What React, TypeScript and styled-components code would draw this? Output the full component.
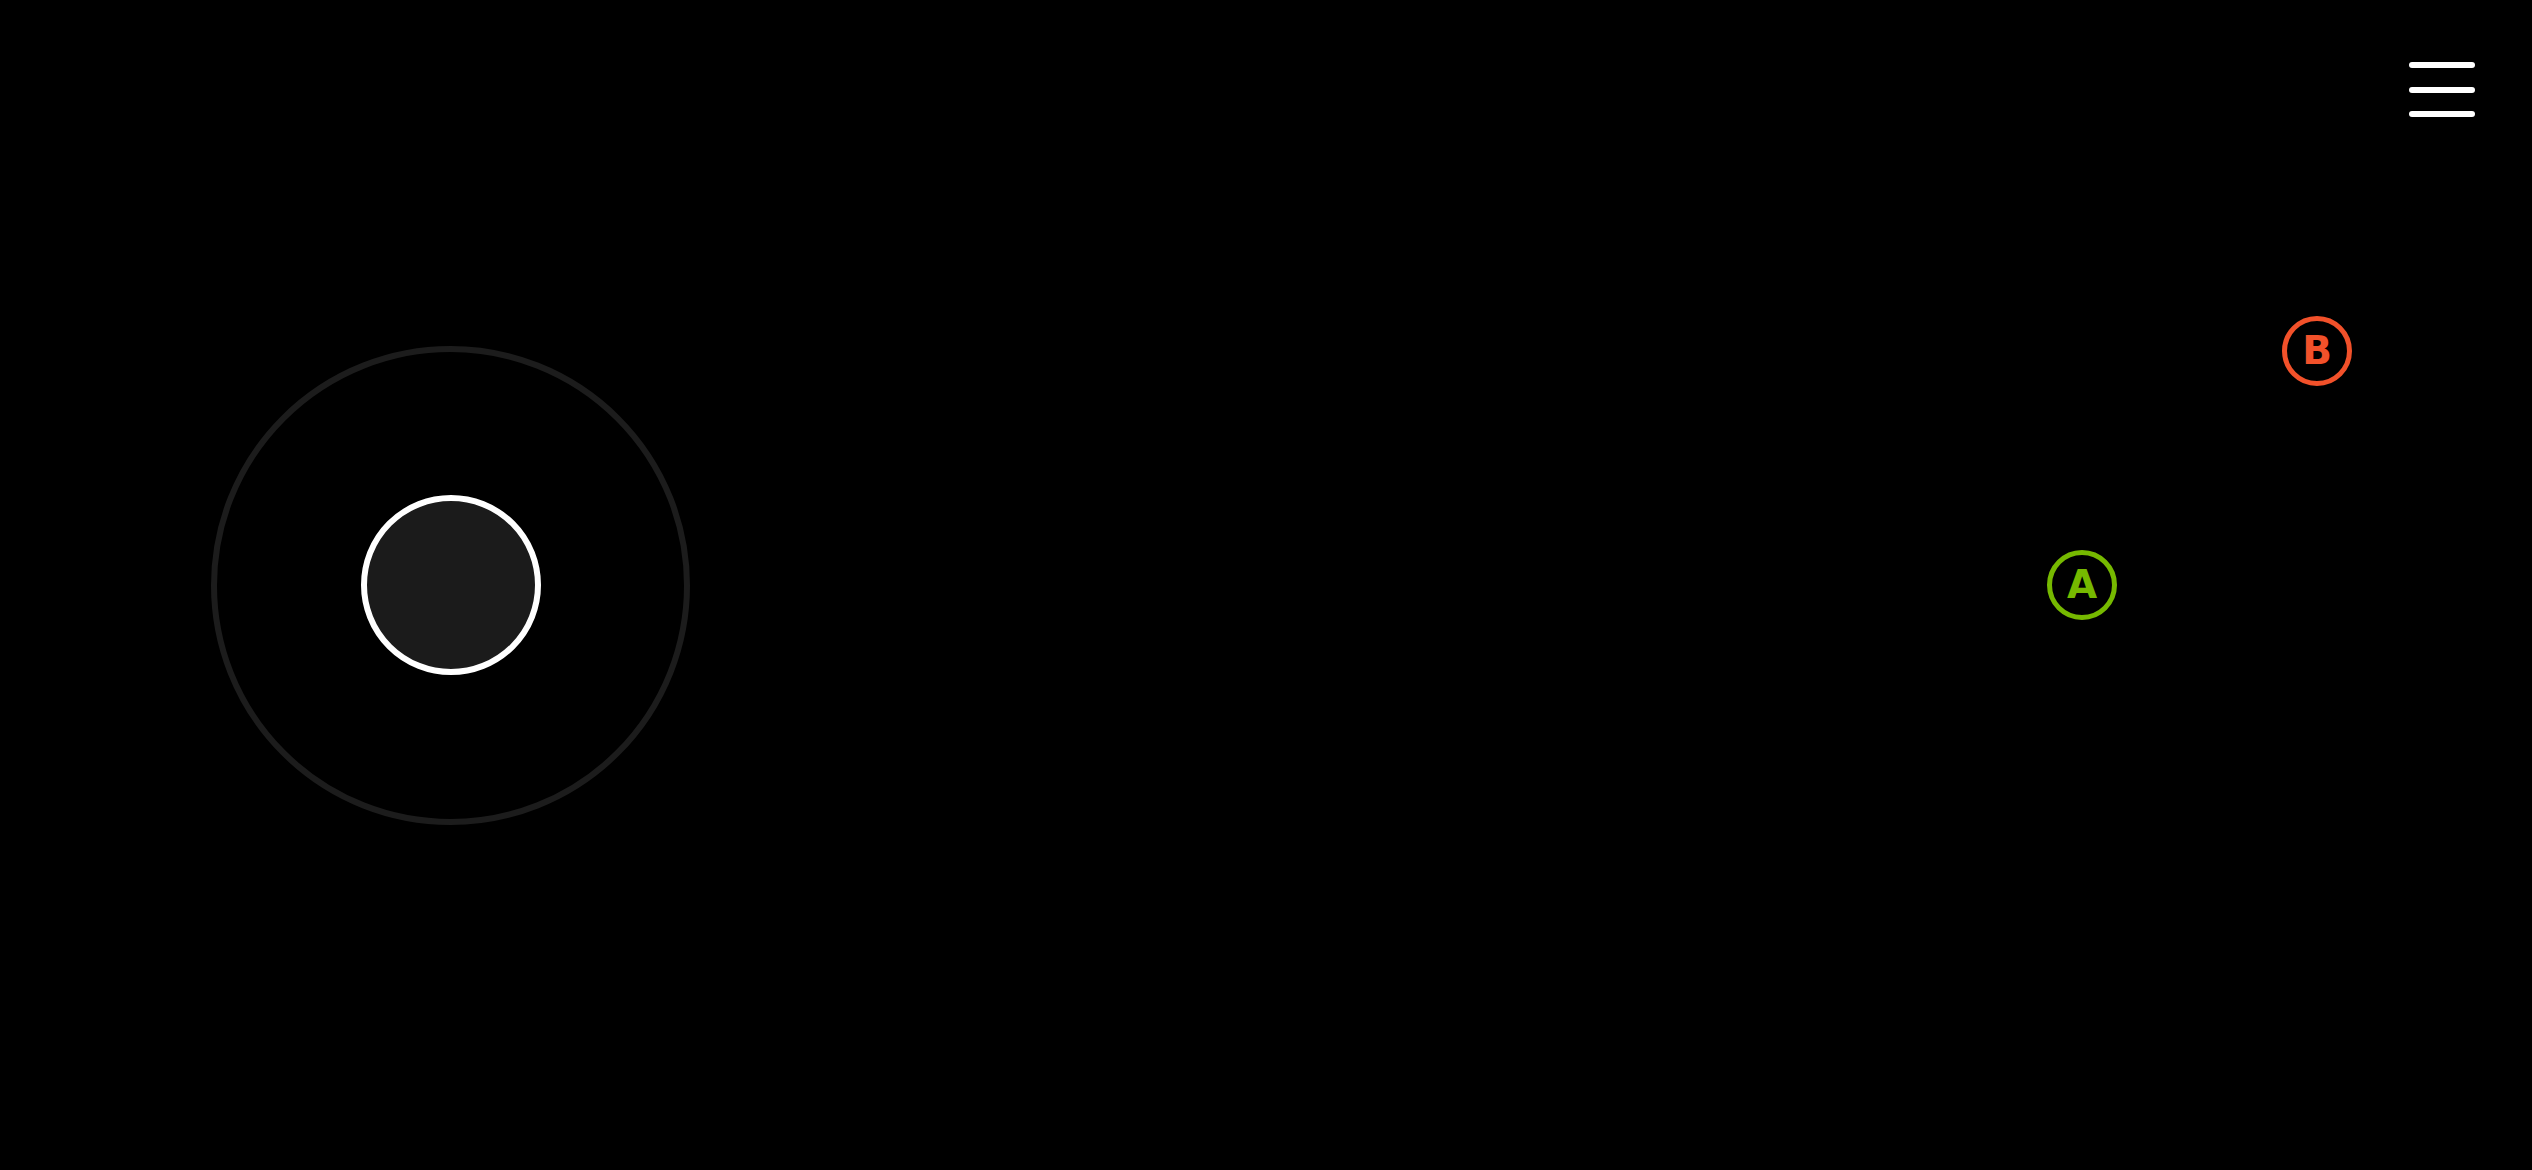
import * as React from 'react'
import styled, { createGlobalStyle } from 'styled-components'

// ---------------------------------------- [Page] ----------------------------------------
const GlobalStyle = createGlobalStyle`
    html, body, #root {
        margin: 0;
        padding: 0;
        width: 100%;
        height: 100%;
        background: #000;
    }
    body {
        font-family: "DejaVu Sans", "Liberation Sans", sans-serif;
        overflow: hidden;
    }
`

const Screen = styled.main`
    position: relative;
    box-sizing: border-box;
    width: 100vw;
    height: 100vh;
    background: #000;
    display: flex;
    flex-direction: row;
    align-items: center;
    justify-content: space-between;
    padding-left: 211px;
    padding-right: 180px;
`

// ---------------------------------------- [Menu] ----------------------------------------
const MenuButton = styled.button`
    position: absolute;
    top: 62px;
    right: 57px;
    width: 66px;
    height: 55px;
    padding: 0;
    border: none;
    background: transparent;
    display: flex;
    flex-direction: column;
    justify-content: space-between;
    cursor: pointer;
`

const MenuBar = styled.span`
    display: block;
    width: 100%;
    height: 6px;
    border-radius: 3px;
    background: #fff;
`

// ---------------------------------------- [Joystick] ----------------------------------------
const JoystickBase = styled.div`
    box-sizing: border-box;
    width: 479px;
    height: 479px;
    border-radius: 50%;
    border: 6px solid #1c1c1c;
    display: flex;
    align-items: center;
    justify-content: center;
`

const JoystickKnob = styled.div`
    box-sizing: border-box;
    width: 180px;
    height: 180px;
    border-radius: 50%;
    border: 6px solid #fff;
    background: #1b1b1b;
`

// ---------------------------------------- [Buttons] ----------------------------------------
const ButtonCluster = styled.div`
    display: flex;
    flex-direction: column;
    justify-content: space-between;
    width: 305px;
    height: 304px;
    /* keeps A on the vertical centre line */
    padding-bottom: 234px;
`

interface ActionProps {
    colour: string
    align: 'flex-start' | 'flex-end'
}

const ActionButton = styled.button<{ $colour: string; $align: string }>`
    box-sizing: border-box;
    width: 70px;
    height: 70px;
    border-radius: 50%;
    border: 5px solid ${(p) => p.$colour};
    background: transparent;
    color: ${(p) => p.$colour};
    align-self: ${(p) => p.$align};
    display: flex;
    align-items: center;
    justify-content: center;
    padding: 0 0 1px 0;
    font-family: "DejaVu Sans", "Liberation Sans", sans-serif;
    font-weight: bold;
    font-size: 39px;
    line-height: 1;
    cursor: pointer;
`

const Action = (props: ActionProps & { label: string }) => (
    <ActionButton $colour={props.colour} $align={props.align}>{props.label}</ActionButton>
)

export default function App() {
    return (
        <>
            <GlobalStyle />
            <Screen>
                <JoystickBase>
                    <JoystickKnob />
                </JoystickBase>
                <ButtonCluster>
                    <Action label="B" colour="#f2512a" align="flex-end" />
                    <Action label="A" colour="#76b900" align="flex-start" />
                </ButtonCluster>
                <MenuButton aria-label="Menu">
                    <MenuBar />
                    <MenuBar />
                    <MenuBar />
                </MenuButton>
            </Screen>
        </>
    )
}
